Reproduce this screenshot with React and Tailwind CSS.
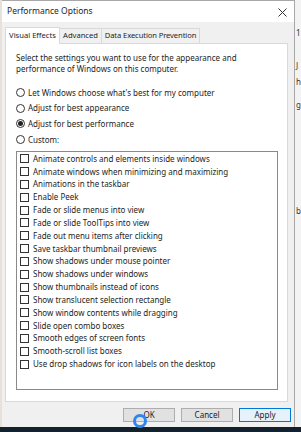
import React from 'react';

const effects = [
  'Animate controls and elements inside windows',
  'Animate windows when minimizing and maximizing',
  'Animations in the taskbar',
  'Enable Peek',
  'Fade or slide menus into view',
  'Fade or slide ToolTips into view',
  'Fade out menu items after clicking',
  'Save taskbar thumbnail previews',
  'Show shadows under mouse pointer',
  'Show shadows under windows',
  'Show thumbnails instead of icons',
  'Show translucent selection rectangle',
  'Show window contents while dragging',
  'Slide open combo boxes',
  'Smooth edges of screen fonts',
  'Smooth-scroll list boxes',
  'Use drop shadows for icon labels on the desktop',
];

const radios = [
  { label: "Let Windows choose what's best for my computer", on: false },
  { label: 'Adjust for best appearance', on: false },
  { label: 'Adjust for best performance', on: true },
  { label: 'Custom:', on: false },
];

const Radio = ({ on, label }) => (
  <div className="flex items-center h-[15.6px]">
    <span className="w-[9px] h-[9px] rounded-full border border-[#333] bg-white flex items-center justify-center shrink-0">
      {on && <span className="w-[5px] h-[5px] rounded-full bg-[#222]" />}
    </span>
    <span className="ml-[3px] leading-none">{label}</span>
  </div>
);

const Button = ({ children, primary }) => (
  <button
    className={
      primary
        ? 'w-[52px] h-[14px] border border-[#0078d7] bg-[#e5f1fb] text-[8px] leading-none text-[#222]'
        : 'w-[52px] h-[14px] border border-[#adadad] bg-[#e1e1e1] text-[8px] leading-none text-[#222]'
    }
  >
    {children}
  </button>
);

export default function App() {
  return (
    <div className="relative w-[301px] h-[432px] overflow-hidden bg-[#f3f3f3] font-['Noto_Sans',sans-serif] text-[#1e1e1e]">
      <div className="flex h-[427px]">
        <div className="w-[2px] bg-[#e6e2da]" />

        <div className="w-[294px] flex flex-col bg-[#f0f0f0] border-t border-r border-[#a8a8a8]">
          {/* title bar */}
          <div className="h-[21px] bg-white flex items-center justify-between pl-[5px] pr-[7px]">
            <span className="text-[8.5px]">Performance Options</span>
            <svg width="9" height="9" viewBox="0 0 9 9" className="mt-[1px]">
              <path d="M0.5 0.5 L8.5 8.5 M8.5 0.5 L0.5 8.5" stroke="#333" strokeWidth="1" />
            </svg>
          </div>

          {/* tabs */}
          <div className="flex items-end h-[17px] mt-[4px] ml-[3px] text-[7.6px] leading-none whitespace-nowrap">
            <div className="h-[17px] w-[55px] bg-white border border-b-0 border-[#d9d9d9] flex items-center justify-center relative z-10 -mb-px pb-px">
              Visual Effects
            </div>
            <div className="h-[15px] w-[42px] border-t border-r border-[#d9d9d9] flex items-center justify-center">
              Advanced
            </div>
            <div className="h-[15px] w-[98px] border-t border-r border-[#d9d9d9] flex items-center justify-center tracking-[-0.1px]">
              Data Execution Prevention
            </div>
          </div>

          {/* tab panel */}
          <div className="h-[359px] ml-[3px] mr-[6px] bg-white border border-[#d9d9d9] flex flex-col pl-[10px] pr-[9px] text-[8px]">
            <p className="mt-[8px] leading-[11px]">
              Select the settings you want to use for the appearance and
              <br />
              performance of Windows on this computer.
            </p>

            <div className="mt-[11px] flex flex-col">
              {radios.map((r) => (
                <Radio key={r.label} on={r.on} label={r.label} />
              ))}
            </div>

            <div className="mt-[4px] mb-[11px] flex-1 border border-[#8a8a8a] pl-[3px] flex flex-col">
              {effects.map((e) => (
                <div key={e} className="flex items-center h-[12.83px]">
                  <span className="w-[9px] h-[9px] border border-[#333] bg-white shrink-0" />
                  <span className="ml-[4px] leading-none">{e}</span>
                </div>
              ))}
            </div>
          </div>

          {/* buttons */}
          <div className="flex justify-end gap-[6px] mt-[6px] pr-[3px]">
            <Button>OK</Button>
            <Button>Cancel</Button>
            <Button primary>Apply</Button>
          </div>
        </div>

        {/* window behind, cut off */}
        <div className="flex-1 flex flex-col text-[8px] leading-none text-[#333] pl-[1px]">
          <span className="mt-[29px]">1</span>
          <span className="mt-[25px]">J</span>
          <span className="mt-[8px]">h</span>
          <span className="mt-[15px]">g</span>
          <span className="mt-[98px]">b</span>
        </div>
      </div>

      <div className="h-[5px] bg-[#13202e]" />

      {/* click indicator */}
      <span className="absolute left-[133px] top-[414px] w-[14px] h-[14px] rounded-full border-[3px] border-[#2f86f0]" />
    </div>
  );
}
